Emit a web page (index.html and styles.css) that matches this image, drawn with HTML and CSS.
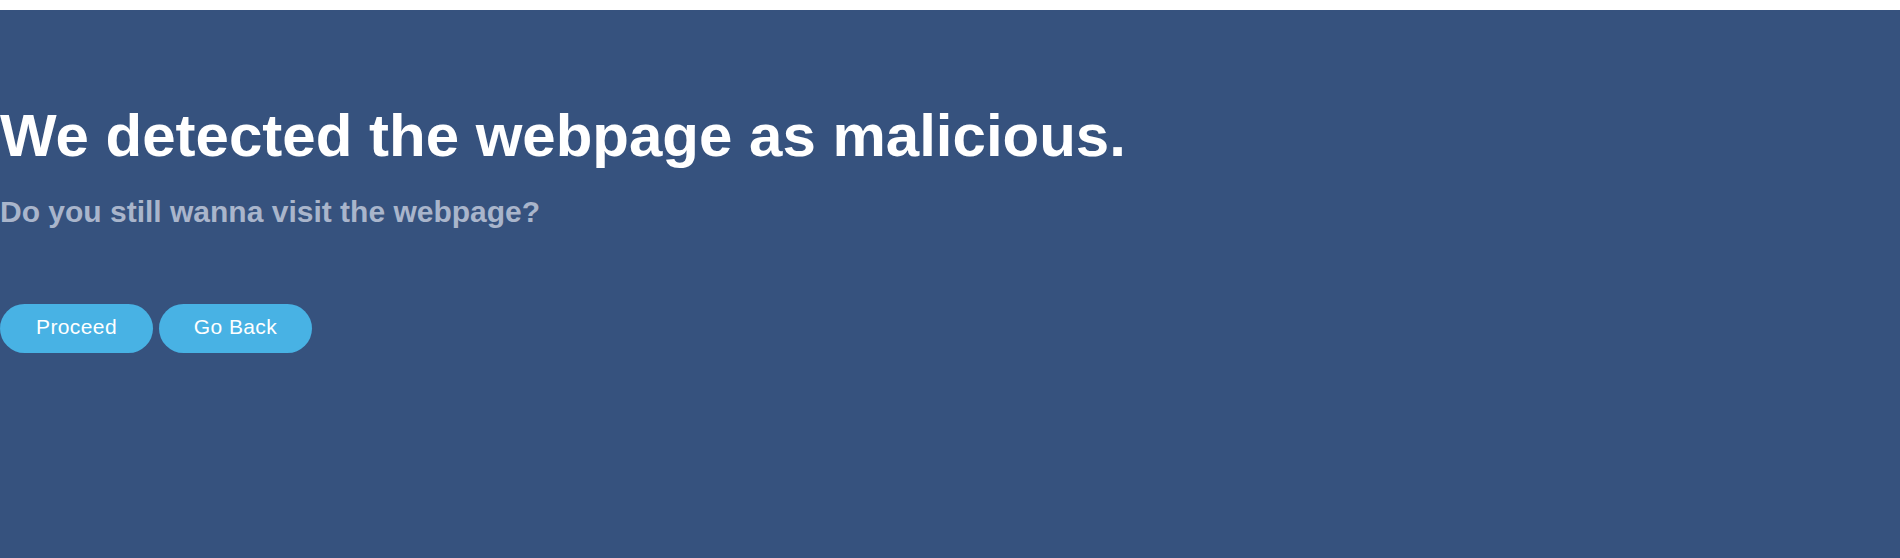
FILE: index.html
```html
<!DOCTYPE html>
<html lang="en">
<head>
<meta charset="utf-8">
<title>Warning</title>
<link rel="stylesheet" href="styles.css">
</head>
<body>
<main class="warning">
  <h1 class="title">We detected the webpage as malicious.</h1>
  <h2 class="subtitle">Do you still wanna visit the webpage?</h2>
  <div class="actions">
    <button class="btn">Proceed</button>
    <button class="btn">Go Back</button>
  </div>
</main>
</body>
</html>
```
FILE: styles.css
```css
html, body {
  margin: 0;
  padding: 0;
  height: 100%;
  background: #ffffff;
}
body {
  display: flex;
  flex-direction: column;
}
.warning {
  margin-top: 10px;
  flex: 1;
  background: #36527e;
  padding-top: 91px;
  font-family: "Liberation Sans", Arial, sans-serif;
}
.title {
  margin: 0;
  font-size: 60px;
  font-weight: 700;
  color: #ffffff;
}
.subtitle {
  margin: 25px 0 0;
  font-size: 30px;
  font-weight: 700;
  color: #a9b5cb;
}
.actions {
  display: flex;
  gap: 6px;
  margin-top: 75px;
}
.btn {
  width: 153px;
  height: 49px;
  border: none;
  border-radius: 25px;
  background: #48b2e4;
  color: #ffffff;
  font-family: "Liberation Sans", Arial, sans-serif;
  font-size: 21px;
  letter-spacing: 0.4px;
  padding: 0 0 4px;
  cursor: pointer;
}
```
